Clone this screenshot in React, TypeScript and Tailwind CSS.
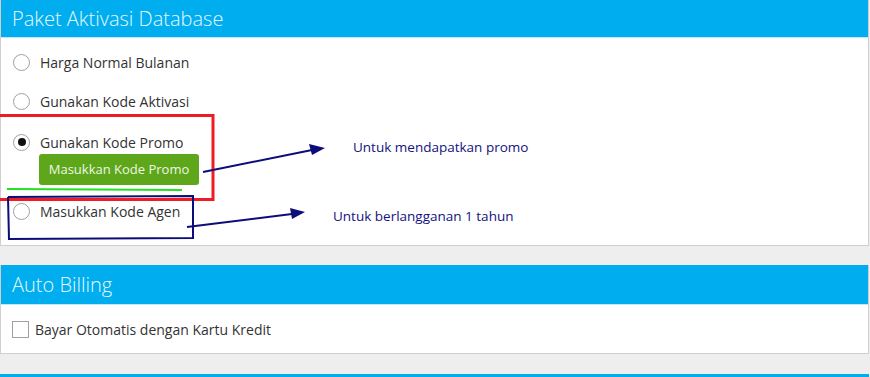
import React from 'react';

const font = { fontFamily: '"Open Sans", "Noto Sans", sans-serif' };

function Radio({ checked = false }: { checked?: boolean }) {
  return (
    <span className="flex h-[17px] w-[17px] shrink-0 items-center justify-center rounded-full border-[1.5px] border-[#a0a0a0] bg-white">
      {checked && <span className="h-[8px] w-[8px] rounded-full bg-[#111]" />}
    </span>
  );
}

function Option({ label, checked, className = '' }: { label: string; checked?: boolean; className?: string }) {
  return (
    <div className={`flex h-[24px] items-center gap-[10px] pl-[12px] ${className}`}>
      <Radio checked={checked} />
      <span className="text-[14px] text-[#333]">{label}</span>
    </div>
  );
}

function PanelHeader({ title, tall = false }: { title: string; tall?: boolean }) {
  return (
    <div className={`flex items-center border-b border-[#bfe9fa] bg-[#00aeef] pl-[11px] ${tall ? 'h-[40px]' : 'h-[38px]'}`}>
      <span className="text-[20px] font-light text-[#e6f7fd]">{title}</span>
    </div>
  );
}

export default function App() {
  return (
    <div className="relative h-[377px] w-[870px] overflow-hidden bg-[#eeeeee]" style={font}>
      {/* Paket Aktivasi */}
      <div className="w-[869px] border-x border-b border-[#cfcfcf] bg-white">
        <PanelHeader title="Paket Aktivasi Database" />
        <div className="h-[207px] pt-[12px]">
          <Option label="Harga Normal Bulanan" />
          <Option label="Gunakan Kode Aktivasi" className="mt-[15px]" />
          <Option label="Gunakan Kode Promo" checked className="mt-[17px]" />
          <div className="pl-[38px]">
            <button className="h-[31px] w-[160px] rounded-[3px] bg-[#5ea61a] text-[13px] text-[#eef7e6]">
              Masukkan Kode Promo
            </button>
          </div>
          <Option label="Masukkan Kode Agen" className="mt-[14px]" />
        </div>
      </div>

      {/* Auto Billing */}
      <div className="mt-[19px] w-[869px] border-x border-b border-[#cfcfcf] bg-white">
        <PanelHeader title="Auto Billing" tall />
        <div className="flex h-[48px] items-center gap-[6px] pl-[11px]">
          <span className="h-[17px] w-[17px] border-[1.5px] border-[#a0a0a0] bg-white" />
          <span className="text-[14px] text-[#333]">Bayar Otomatis dengan Kartu Kredit</span>
        </div>
      </div>

      <div className="mt-[20px] h-[10px] w-[869px] bg-[#00aeef]" />

      {/* annotations */}
      <svg className="pointer-events-none absolute left-0 top-0" width="870" height="377">
        <rect x="-3" y="115.5" width="216" height="84" fill="none" stroke="#ee1c25" strokeWidth="3" />
        <line x1="7" y1="189" x2="182" y2="190" stroke="#22e022" strokeWidth="2" />
        <polyline points="8,197 193,196 193,238 9,239 8,197" fill="none" stroke="#0c0c7a" strokeWidth="2" />
        <line x1="203" y1="172" x2="312" y2="150" stroke="#0c0c7a" strokeWidth="2" />
        <polygon points="325,148 309,144 312,155" fill="#0c0c7a" />
        <line x1="187" y1="227" x2="292" y2="214" stroke="#0c0c7a" strokeWidth="2" />
        <polygon points="305,212 290,208 292,219" fill="#0c0c7a" />
      </svg>
      <span className="absolute left-[353px] top-[137px] text-[13.5px] text-[#12127e]">Untuk mendapatkan promo</span>
      <span className="absolute left-[333px] top-[206px] text-[13.5px] text-[#12127e]">Untuk berlangganan 1 tahun</span>
    </div>
  );
}
